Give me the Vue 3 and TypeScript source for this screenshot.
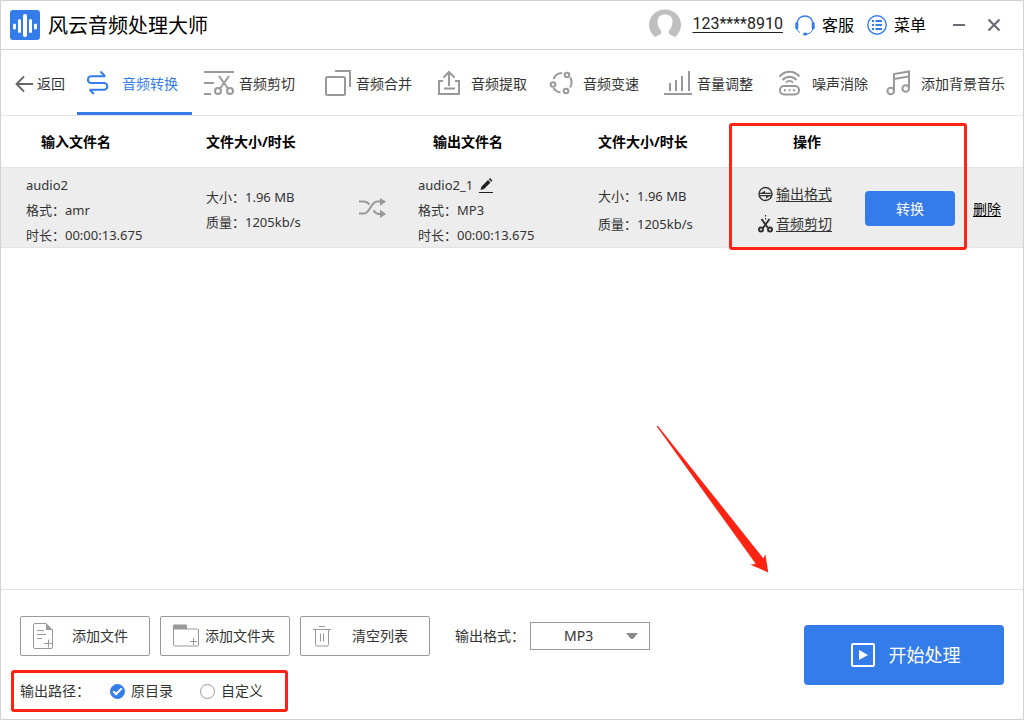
<script setup lang="ts">
import { ref } from 'vue'

interface Tab {
  id: string
  label: string
}

interface AudioFile {
  id: number
  name: string
  format: string
  outName: string
  outFormat: string
  duration: string
  size: string
  quality: string
}

const tabs: Tab[] = [
  { id: 'convert', label: '音频转换' },
  { id: 'cut', label: '音频剪切' },
  { id: 'merge', label: '音频合并' },
  { id: 'extract', label: '音频提取' },
  { id: 'speed', label: '音频变速' },
  { id: 'volume', label: '音量调整' },
  { id: 'noise', label: '噪声消除' },
  { id: 'music', label: '添加背景音乐' },
]

const activeTab = ref('convert')
const outputFormat = ref('MP3')
const outputPath = ref('origin')

const files = ref<AudioFile[]>([
  {
    id: 1,
    name: 'audio2',
    format: 'amr',
    outName: 'audio2_1',
    outFormat: 'MP3',
    duration: '00:00:13.675',
    size: '1.96 MB',
    quality: '1205kb/s',
  },
])

function removeFile(id: number) {
  files.value = files.value.filter((f) => f.id !== id)
}
</script>

<template>
  <div class="window">
    <header class="titlebar">
      <svg class="logo" width="30" height="30" viewBox="0 0 30 30">
        <rect width="30" height="30" rx="3" fill="#357ceb" />
        <g stroke="#fff" stroke-linecap="round" stroke-width="3">
          <path d="M4.500 15v3M9.500 10.500v11M20.500 10.500v11M25.500 15v3" />
          <path d="M15 6v19" stroke-width="4" />
        </g>
      </svg>
      <h1>风云音频处理大师</h1>
      <div class="account">
        <svg width="32" height="31" viewBox="0 0 32 31">
          <path d="M6 28A16 15.500 0 1 1 26 28L21 25.500C19.500 24.500 19.500 23 20 21.500C22 19.500 23.500 16.500 23.500 12.500C23.500 8 20.500 5.500 16 5.500S8.500 8 8.500 12.500C8.500 16.500 10 19.500 12 21.500C12.500 23 12.500 24.500 11 25.500Z" fill="#bfbfbf" />
        </svg>
        <a class="phone" href="#">123****8910</a>
      </div>
      <button class="bar-button support" type="button">
        <svg width="20" height="21" viewBox="0 0 20 21" fill="none" stroke="#357ceb">
          <path d="M2 8C3 3.500 6.300 1 10 1s7 2.500 8 7" stroke-width="1.300" />
          <path d="M1.800 8.500v4.500M18.200 8.500v4.500" stroke-width="3" stroke-linecap="round" />
          <path d="M18 14c-1 2.800-3 4.300-6 5M2 14c.600 1.500 1.500 2.700 3 3.600" />
          <ellipse cx="10.200" cy="19" rx="2.300" ry="1.600" fill="#357ceb" stroke="none" />
        </svg>
        客服
      </button>
      <button class="bar-button menu" type="button">
        <svg width="20" height="20" viewBox="0 0 20 20" fill="none" stroke="#357ceb">
          <circle cx="10" cy="10" r="9.200" stroke-width="1.400" />
          <path d="M5 6h2M5 10h2M5 14h2M8.500 6H15M8.500 10H15M8.500 14H15" stroke-width="1.800" />
        </svg>
        菜单
      </button>
      <button class="win-button" type="button" aria-label="最小化">
        <svg width="14" height="14" viewBox="0 0 14 14"><path d="M1 7h12" stroke="#6e6a75" stroke-width="2" /></svg>
      </button>
      <button class="win-button close" type="button" aria-label="关闭">
        <svg width="14" height="14" viewBox="0 0 14 14"><path d="M1.500 1.500l11 11M12.500 1.500l-11 11" stroke="#6e6a75" stroke-width="2.200" /></svg>
      </button>
    </header>

    <nav class="toolbar">
      <button class="back" type="button">
        <svg width="18" height="18" viewBox="0 0 18 18" fill="none" stroke="#666" stroke-width="1.800">
          <path d="M18 9H1.500M9 1.500L1.500 9 9 16.500" />
        </svg>
        返回
      </button>
      <div class="tabs">
        <button
          v-for="tab in tabs"
          :key="tab.id"
          type="button"
          class="tab"
          :class="{ active: tab.id === activeTab }"
          @click="activeTab = tab.id"
        >
          <svg class="tab-icon" width="35" height="30" viewBox="0 0 35 30" fill="none" stroke="currentColor" stroke-width="2">
            <g v-if="tab.id === 'convert'">
              <path d="M13.500 3.500L18 8.300H4.300a3.400 3.400 0 0 0 0 6.800H17a3.300 3.300 0 0 1 0 6.600H2.800L6.800 26" stroke-linejoin="bevel" />
            </g>
            <g v-else-if="tab.id === 'cut'">
              <path d="M0 4h30M0 15h10M0 26h7M15 8l9 12.500M25 8l-9 12.500" />
              <circle cx="14" cy="23" r="3" /><circle cx="26" cy="23" r="3" />
            </g>
            <g v-else-if="tab.id === 'merge'">
              <rect x="5" y="9" width="19" height="18" rx="1.500" /><path d="M14 3h15v16" />
            </g>
            <g v-else-if="tab.id === 'extract'">
              <path d="M7 13H3v13h20V13h-4M13 18V4.500M7.500 9.500L13 4l5.500 5.500M8 20.500h11" />
            </g>
            <g v-else-if="tab.id === 'speed'">
              <path d="M5.500 11C7 7.500 10 5 14 5M22.500 9.500c1.500 3.500 1.500 7-.5 10M5.500 20c1.500 2.500 4 4 7 4.500" />
              <circle cx="19" cy="7" r="2.300" /><circle cx="5" cy="16.500" r="2.300" /><circle cx="18" cy="23" r="2.300" />
            </g>
            <g v-else-if="tab.id === 'volume'">
              <path d="M2 26h28M8 23v-8M14 23V12M20 23V8M27 23V3" />
            </g>
            <g v-else-if="tab.id === 'noise'">
              <path d="M2.500 8.500C8 2 17 2 22.500 8.500M5.500 12c4-4.500 10-4.500 14 0M9 14.500c2-2 5-2 7 0" />
              <rect x="3" y="18" width="19" height="8.500" rx="4" /><path d="M7 22.300h2M11.500 22.300h2M16 22.300h2" />
            </g>
            <g v-else>
              <path d="M8 23V6l15-2.500V20M8 11l15-2.500" />
              <circle cx="4.700" cy="23" r="3.300" /><circle cx="19.700" cy="20.500" r="3.300" />
            </g>
          </svg>
          <span>{{ tab.label }}</span>
        </button>
      </div>
    </nav>

    <main class="content">
      <table>
        <colgroup>
          <col class="c-name" /><col class="c-size" /><col class="c-icon" /><col class="c-out" />
          <col class="c-outsize" /><col class="c-ops" /><col class="c-del" />
        </colgroup>
        <thead>
          <tr>
            <th class="name-head first">输入文件名</th>
            <th>文件大小/时长</th>
            <th></th>
            <th class="name-head">输出文件名</th>
            <th>文件大小/时长</th>
            <th class="ops-head">操作<span class="ops-mark"></span></th>
            <th></th>
          </tr>
        </thead>
        <tbody>
          <tr v-for="file in files" :key="file.id">
            <td class="info first">
              <div>{{ file.name }}</div>
              <div>格式：{{ file.format }}</div>
              <div>时长：{{ file.duration }}</div>
            </td>
            <td class="info">
              <div>大小：{{ file.size }}</div>
              <div>质量：{{ file.quality }}</div>
            </td>
            <td class="shuffle">
              <svg width="27" height="20" viewBox="0 0 27 20" fill="none" stroke="#999" stroke-width="2">
                <path d="M0 3.500h5c2.500 0 4 1.200 5.500 3M14.500 12.500c1.500 2.200 3 3.500 5.500 3.500h2M0 15.500h5c6 0 7-12 13-12h4" />
                <path d="M21 0l6 3.500L21 8zM21 11.500l6 4.500-6 4z" fill="#999" stroke="none" />
              </svg>
            </td>
            <td class="info">
              <div class="out-name">
                {{ file.outName }}
                <button class="edit" type="button" aria-label="重命名">
                  <svg width="14" height="15" viewBox="0 0 14 15" fill="#222">
                    <path d="M1.500 12l1-3.500L9 2l2.500 2.500L5 11zM9.800 1.200L11 0l2.500 2.500-1.200 1.200zM0 14h14v1H0z" />
                  </svg>
                </button>
              </div>
              <div>格式：{{ file.outFormat }}</div>
              <div>时长：{{ file.duration }}</div>
            </td>
            <td class="info loose">
              <div>大小：{{ file.size }}</div>
              <div>质量：{{ file.quality }}</div>
            </td>
            <td>
              <div class="ops">
                <div class="links">
                  <a href="#">
                    <svg width="15" height="16" viewBox="0 0 15 16" fill="none" stroke="#333" stroke-width="1.400">
                      <circle cx="7.500" cy="8" r="6.500" /><path d="M1 7.300h12M2 9.700h12" stroke-width="1.200" />
                      <path d="M7 4.500v2.500H3.500zM8 12.500V10h3.500z" fill="#333" stroke="none" />
                    </svg>
                    <span>输出格式</span>
                  </a>
                  <a href="#">
                    <svg width="15" height="18" viewBox="0 0 15 18" fill="none" stroke="#333" stroke-width="2">
                      <path d="M3.500 4l6.500 9M11.500 4L5 13" />
                      <circle cx="3" cy="14.500" r="2" /><circle cx="12" cy="14.500" r="2" />
                      <path d="M7.500 0v1.500M7.500 3v1.500" stroke-width="1.200" />
                    </svg>
                    <span>音频剪切</span>
                  </a>
                </div>
                <button class="convert" type="button">转换</button>
              </div>
            </td>
            <td><button class="delete" type="button" @click="removeFile(file.id)">删除</button></td>
          </tr>
        </tbody>
      </table>
      <svg class="pointer" width="113" height="148" viewBox="0 0 113 148">
        <path d="M.600 1.300L1.800.800L107.500 133.500L109.300 129L112.300 147.500L94.600 139.700L99.700 138.700Z" fill="#ff2314" />
      </svg>
    </main>

    <footer class="footer">
      <div class="settings">
        <div class="actions">
          <button class="outline" type="button">
            <svg width="22" height="28" viewBox="0 0 22 28" fill="none" stroke="#999">
              <path d="M14 1.500H3a1.500 1.500 0 0 0-1.500 1.500v22A1.500 1.500 0 0 0 3 26.500h16a1.500 1.500 0 0 0 1.500-1.500V7.500" />
              <path d="M14 1v7h7z" fill="#999" stroke="none" />
              <path d="M5 8.500h7M5 12.500h9M5 16.500h5M12 21.500h8M16.500 17.500v8" />
            </svg>
            <span>添加文件</span>
          </button>
          <button class="outline" type="button">
            <svg width="28" height="24" viewBox="0 0 28 24" fill="none" stroke="#999">
              <path d="M1.500 5v16a1 1 0 0 0 1 1h23a1 1 0 0 0 1-1V6a1 1 0 0 0-1-1H1.500" />
              <path d="M1 5V1.500A1 1 0 0 1 2 .500h12a1 1 0 0 1 1 1V5z" fill="#999" stroke="none" />
              <path d="M18 17.500h7M21.500 14v7" />
            </svg>
            <span>添加文件夹</span>
          </button>
          <button class="outline" type="button">
            <svg width="20" height="22" viewBox="0 0 20 22" fill="none" stroke="#999">
              <path d="M1 4.500h18M7 1.500h6M3.500 4.500v15a1.500 1.500 0 0 0 1.500 1.500h10a1.500 1.500 0 0 0 1.500-1.500v-15M8.500 8.500v8M11.500 8.500v8" />
            </svg>
            <span>清空列表</span>
          </button>
          <label class="format-label" for="format">输出格式：</label>
          <div class="select">
            <select id="format" v-model="outputFormat">
              <option>MP3</option>
              <option>WAV</option>
              <option>AAC</option>
            </select>
            <svg width="12" height="6" viewBox="0 0 12 6"><path d="M0 0h12L7 6H5z" fill="#888" /></svg>
          </div>
        </div>
        <div class="path" role="radiogroup" aria-labelledby="path-label">
          <span id="path-label" class="path-label">输出路径：</span>
          <label><input v-model="outputPath" type="radio" name="path" value="origin" />原目录</label>
          <label><input v-model="outputPath" type="radio" name="path" value="custom" />自定义</label>
        </div>
      </div>
      <button class="start" type="button">
        <svg width="24" height="24" viewBox="0 0 24 24">
          <rect x="1" y="1" width="22" height="22" rx="1" fill="none" stroke="#fff" stroke-width="2" />
          <path d="M8 7l9 5-9 5z" fill="#fff" />
        </svg>
        开始处理
      </button>
    </footer>
  </div>
</template>

<style>
body {
  margin: 0;
}
</style>

<style scoped>
.window {
  box-sizing: border-box;
  min-height: 100vh;
  display: flex;
  flex-direction: column;
  border: 1px solid #d2d2d2;
  background: #fff;
  color: #333;
  font: 14px/20px "Noto Sans", "Noto Sans CJK SC", sans-serif;
}

button,
select {
  font: inherit;
  color: inherit;
  background: none;
  border: 0;
  padding: 0;
  margin: 0;
  cursor: pointer;
  white-space: nowrap;
}

svg {
  display: block;
  flex: none;
}

a {
  color: inherit;
}

.titlebar {
  display: flex;
  align-items: center;
  height: 48px;
  padding: 0 22px 0 9px;
  border-bottom: 1px solid #d2d2d2;
  color: #000;
}

h1 {
  flex: 1;
  margin: 0 0 0 8px;
  padding-top: 2px;
  font-size: 20px;
  line-height: 28px;
  font-weight: 400;
}

.account {
  display: flex;
  align-items: center;
  gap: 11px;
  margin-right: 12px;
  padding-bottom: 2px;
}

.phone {
  font: 16px/20px Roboto, sans-serif;
  color: #222;
  text-underline-offset: 3px;
}

.bar-button {
  display: flex;
  align-items: center;
  gap: 7px;
  font-size: 16px;
  line-height: 24px;
}

.menu {
  margin: 0 26px 0 13px;
}

.win-button.close {
  margin-left: 21px;
}

.toolbar {
  display: flex;
  height: 65px;
  padding-left: 14px;
  border-bottom: 1px solid #e4e4e4;
}

.back {
  display: flex;
  align-items: center;
  gap: 4px;
  width: 62px;
  padding-top: 2px;
}

.tabs {
  flex: 1;
  display: grid;
  grid-template-columns: 117fr 117fr 115fr 112fr 114fr 115fr 109fr 147fr;
}

.tab {
  display: flex;
  align-items: center;
  margin-right: 2px;
  padding: 3px 0 0 10px;
  border-bottom: 3px solid transparent;
}

.tab span {
  padding-top: 2px;
}

.tab-icon {
  color: #999;
}

.tab.active {
  color: #357ceb;
  border-bottom-color: #357ceb;
}

.tab.active .tab-icon {
  color: #357ceb;
}

.content {
  flex: 1;
  position: relative;
}

table {
  width: 100%;
  table-layout: fixed;
  border-collapse: collapse;
}

.c-name { width: 205px; }
.c-size { width: 140px; }
.c-icon { width: 72px; }
.c-out { width: 180px; }
.c-outsize { width: 160px; }
.c-ops { width: 215px; }
.c-del { width: 50px; }

th {
  height: 51px;
  padding: 0;
  text-align: left;
  color: #000;
  white-space: nowrap;
}

.name-head {
  padding-left: 15px;
}

.name-head.first {
  padding-left: 40px;
}

.ops-head {
  position: relative;
  padding-left: 35px;
}

.ops-mark {
  position: absolute;
  z-index: 1;
  top: 7px;
  left: -29px;
  box-sizing: border-box;
  width: 238px;
  height: 127px;
  border: 3px solid #ff2314;
  border-radius: 3px;
  pointer-events: none;
}

td {
  box-sizing: border-box;
  height: 81px;
  padding: 0;
  font-size: 13px;
  line-height: 25px;
  white-space: nowrap;
}

tbody tr {
  background: #ededed;
  box-shadow: inset 0 1px #e4e4e4, inset 0 -1px #e4e4e4;
}

td.info {
  padding-top: 5px;
}

td.first {
  padding-left: 25px;
}

td.loose {
  line-height: 28px;
}

.shuffle svg {
  margin-left: 13px;
}

.out-name {
  display: flex;
  align-items: center;
  gap: 6px;
}

.ops {
  display: flex;
  align-items: center;
  justify-content: space-between;
  padding: 2px 18px 0 0;
}

.links {
  display: grid;
  gap: 10px;
}

.links a {
  display: flex;
  align-items: center;
  gap: 3px;
  font-size: 14px;
  line-height: 20px;
}

.links a,
.delete {
  text-decoration: underline;
  text-underline-offset: 2px;
}

.convert {
  width: 90px;
  height: 35px;
  border-radius: 4px;
  background: #357ceb;
  color: #fff;
  font-size: 14px;
}

.delete {
  padding-top: 2px;
  color: #000;
  font-size: 14px;
}

.pointer {
  position: absolute;
  right: 254px;
  bottom: 16px;
  pointer-events: none;
}

.footer {
  display: flex;
  justify-content: space-between;
  align-items: flex-start;
  padding: 26px 19px 7px 10px;
  border-top: 1px solid #e4e4e4;
}

.settings {
  display: grid;
  justify-items: start;
  gap: 14px;
}

.actions {
  display: flex;
  align-items: center;
  gap: 10px;
  margin-left: 9px;
}

.outline {
  box-sizing: border-box;
  display: grid;
  grid-template-columns: 28px 1fr;
  align-items: center;
  width: 130px;
  height: 40px;
  padding: 0 9px 0 11px;
  border: 1px solid #999;
  border-radius: 2px;
}

.outline span {
  text-align: center;
}

.format-label {
  margin-left: 15px;
  width: 65px;
  white-space: nowrap;
}

.select {
  display: grid;
  align-items: center;
  width: 120px;
}

.select > * {
  grid-area: 1 / 1;
}

.select svg {
  justify-self: end;
  margin-right: 12px;
  pointer-events: none;
}

select {
  appearance: none;
  width: 100%;
  height: 28px;
  padding-left: 33px;
  border: 1px solid #999;
  border-radius: 0;
}

.path {
  box-sizing: border-box;
  display: flex;
  align-items: center;
  height: 42px;
  padding: 0 22px 0 6px;
  border: 3px solid #ff2314;
  border-radius: 3px;
}

.path-label {
  width: 90px;
}

.path label {
  display: flex;
  align-items: center;
  gap: 6px;
}

.path label + label {
  margin-left: 27px;
}

input {
  appearance: none;
  box-sizing: border-box;
  display: grid;
  place-items: center;
  width: 15px;
  height: 15px;
  margin: 0;
  border: 1px solid #999;
  border-radius: 50%;
}

input:checked {
  border-color: #357ceb;
  background: #357ceb;
}

input:checked::after {
  content: "";
  width: 7px;
  height: 3px;
  margin-bottom: 2px;
  border: solid #fff;
  border-width: 0 0 2px 2px;
  transform: rotate(-45deg);
}

.start {
  display: flex;
  align-items: center;
  justify-content: center;
  gap: 14px;
  width: 200px;
  height: 60px;
  margin-top: 9px;
  padding-left: 3px;
  border-radius: 4px;
  background: #357ceb;
  color: #fff;
  font-size: 18px;
}
</style>
